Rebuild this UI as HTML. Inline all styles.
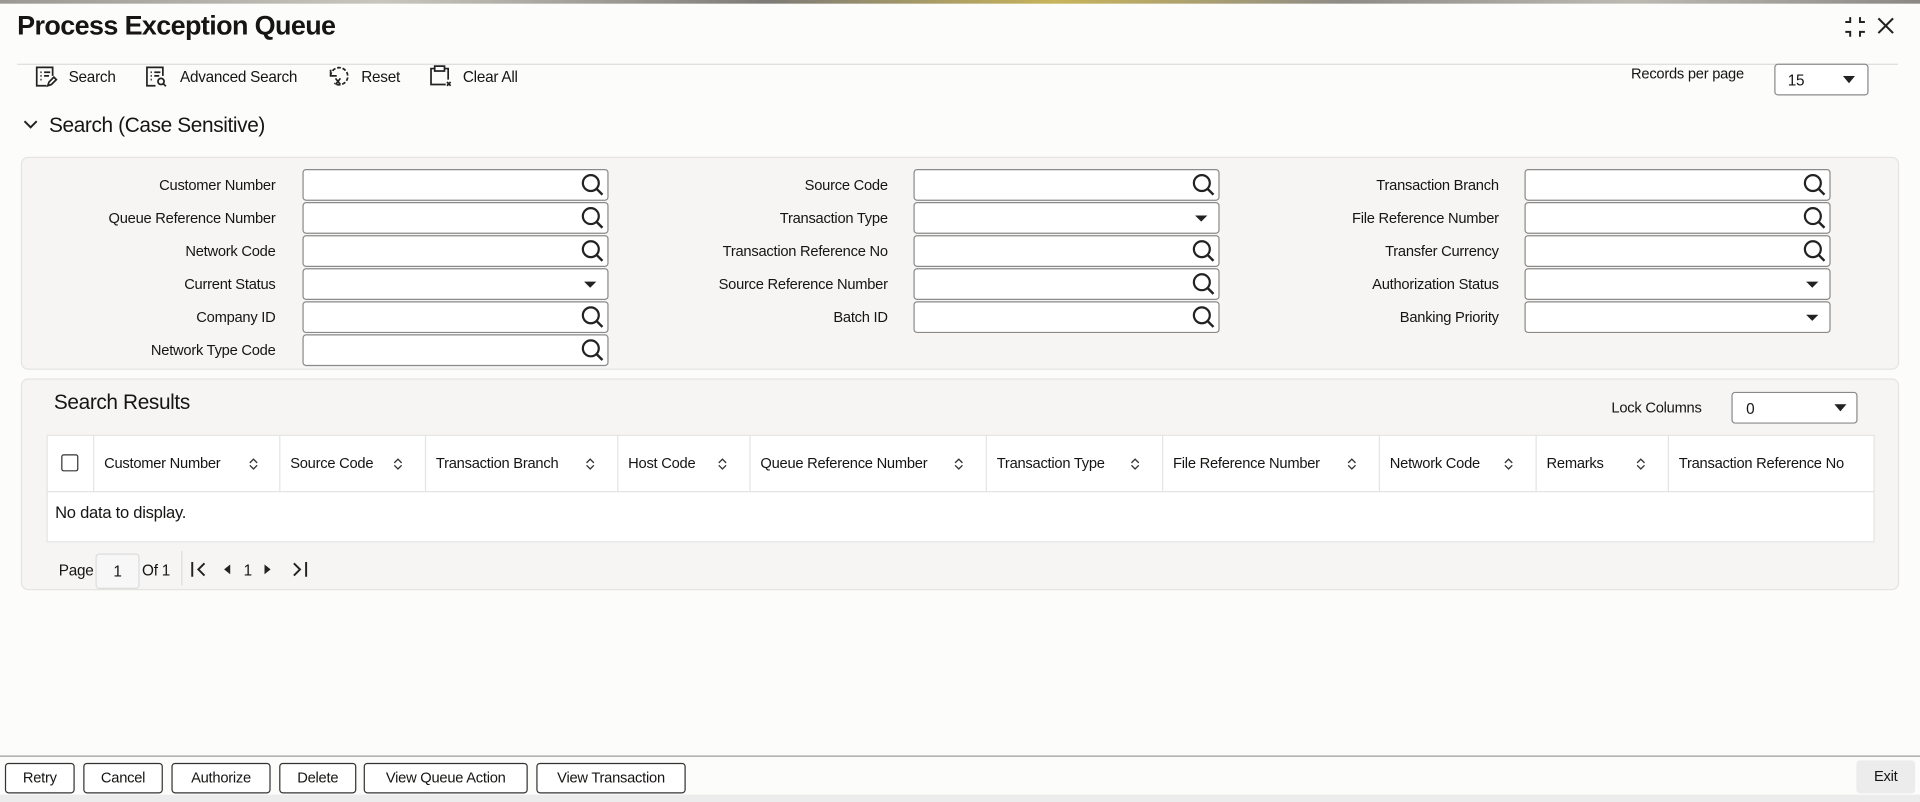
<!DOCTYPE html>
<html><head><meta charset="utf-8">
<style>
html,body{margin:0;padding:0;width:1920px;height:802px;overflow:hidden;background:#fcfcfb;}
#w{position:absolute;left:0;top:0;width:1568px;height:655px;transform:scale(1.22449);transform-origin:0 0;font-family:"Liberation Sans",sans-serif;color:#161513;font-size:12.5px;letter-spacing:-0.2px;}
.a{position:absolute;}
.lbl{position:absolute;text-align:right;width:220px;font-size:12px;line-height:25px;top:1px;}
.inp{position:absolute;width:248px;height:24px;border:1px solid #8a8a8a;border-radius:3px;background:#fff;}
.inp svg{position:absolute;right:2px;top:2px;}
.th{position:absolute;top:355px;height:47px;line-height:47px;border-right:1px solid #e4e4e4;font-size:12px;padding-left:8px;box-sizing:border-box;}
.th svg{position:absolute;top:18px;}
.btn{position:absolute;top:623px;height:23px;border:1px solid #333;border-radius:3px;background:#fff;line-height:23px;text-align:center;font-size:12px;}
</style></head><body>
<div id="w">
<div class="a" style="left:0;top:0;width:1568px;height:3px;background:linear-gradient(90deg,#9a9892,#c9c6bd 20%,#7d7b76 40%,#c8b45a 55%,#8d8b86 70%,#bdbab2 85%,#8a8884);"></div>
<div class="a" style="left:14px;top:8px;font-size:22px;font-weight:bold;letter-spacing:-0.5px;">Process Exception Queue</div>
<svg class="a" style="left:1505px;top:12px" width="20" height="20" viewBox="0 0 20 20" fill="none" stroke="#222" stroke-width="1.6"><path d="M2 6h4V2M14 2v4h4M2 14h4v4M18 14h-4v4"/></svg>
<svg class="a" style="left:1533px;top:14px" width="14" height="14" viewBox="0 0 14 14" stroke="#222" stroke-width="1.7"><path d="M1 1l12 12M13 1L1 13"/></svg>
<div class="a" style="left:14px;top:52px;width:1536px;height:1px;background:#ddd;"></div>

<svg width="0" height="0" style="position:absolute"><defs><symbol id="q" viewBox="0 0 20 20"><circle cx="8.5" cy="8.5" r="6.5" fill="none" stroke="#222" stroke-width="1.8"/><path d="M13 13l5 5" stroke="#222" stroke-width="2"/></symbol><symbol id="d" viewBox="0 0 20 20"><path d="M5 8h10l-5 5z" fill="#222"/></symbol><symbol id="s" viewBox="0 0 8 12"><path d="M1 5l3-3 3 3M1 7l3 3 3-3" fill="none" stroke="#333" stroke-width="1.1"/></symbol></defs></svg>

<svg class="a" style="left:28px;top:53px" width="19" height="19" viewBox="0 0 19 19" fill="none" stroke="#222" stroke-width="1.4"><path d="M10 17H2V2h13v7"/><path d="M5 6h1M8 6h5M5 9h1M8 9h4M5 12h1"/><path d="M11 17l1-3 4-4 2 2-4 4z"/></svg>
<div class="a" style="left:56px;top:56px;">Search</div>
<svg class="a" style="left:118px;top:53px" width="19" height="19" viewBox="0 0 19 19" fill="none" stroke="#222" stroke-width="1.4"><path d="M9 17H2V2h13v7"/><path d="M5 6h1M8 6h5M5 9h1M8 9h4M5 12h1"/><circle cx="13.5" cy="13.5" r="2.5"/><path d="M15.5 15.5l2 2"/></svg>
<div class="a" style="left:147px;top:56px;">Advanced Search</div>
<svg class="a" style="left:266px;top:53px" width="20" height="20" viewBox="0 0 20 20" fill="none" stroke="#222" stroke-width="1.4"><path d="M4 9a7 7 0 1 1 3 6" stroke-dasharray="3 1.5"/><path d="M4 4v5h5"/><path d="M8 11l4 5M12 11l-4 5"/></svg>
<div class="a" style="left:295px;top:56px;">Reset</div>
<svg class="a" style="left:350px;top:52px" width="20" height="20" viewBox="0 0 20 20" fill="none" stroke="#222" stroke-width="1.4"><path d="M14 17H2V4h3M13 4h3v9"/><rect x="5" y="2" width="8" height="4"/><path d="M15 15l3 3M18 15l-3 3"/></svg>
<div class="a" style="left:378px;top:56px;">Clear All</div>

<div class="a" style="left:1332px;top:53px;font-size:12px;">Records per page</div>
<div class="a" style="left:1449px;top:52px;width:75px;height:24px;border:1px solid #8a8a8a;border-radius:3px;background:#fff;"><span class="a" style="left:10px;top:6px;">15</span><svg class="a" style="right:10px;top:9px" width="10" height="6"><path d="M0 0h10L5 6z" fill="#222"/></svg></div>

<svg class="a" style="left:19px;top:98px" width="12" height="8" viewBox="0 0 12 8" fill="none" stroke="#222" stroke-width="1.6"><path d="M1 1l5 5 5-5"/></svg>
<div class="a" style="left:40px;top:93px;font-size:17px;letter-spacing:-0.3px;">Search (Case Sensitive)</div>

<div class="a" style="left:17px;top:128px;width:1532px;height:172px;background:#f6f5f3;border:1px solid #e6e4e1;border-radius:6px;"></div>
<div class="a" style="left:17px;top:309px;width:1532px;height:171px;background:#f6f5f3;border:1px solid #e6e4e1;border-radius:6px;"></div>

<div style="position:absolute;left:5px;top:0">
<div class="lbl" style="top:139px">Customer Number</div>
<div class="lbl" style="top:166px">Queue Reference Number</div>
<div class="lbl" style="top:193px">Network Code</div>
<div class="lbl" style="top:220px">Current Status</div>
<div class="lbl" style="top:247px">Company ID</div>
<div class="lbl" style="top:274px">Network Type Code</div>
</div>
<div style="position:absolute;left:505px;top:0">
<div class="lbl" style="top:139px">Source Code</div>
<div class="lbl" style="top:166px">Transaction Type</div>
<div class="lbl" style="top:193px">Transaction Reference No</div>
<div class="lbl" style="top:220px">Source Reference Number</div>
<div class="lbl" style="top:247px">Batch ID</div>
</div>
<div style="position:absolute;left:1004px;top:0">
<div class="lbl" style="top:139px">Transaction Branch</div>
<div class="lbl" style="top:166px">File Reference Number</div>
<div class="lbl" style="top:193px">Transfer Currency</div>
<div class="lbl" style="top:220px">Authorization Status</div>
<div class="lbl" style="top:247px">Banking Priority</div>
</div>

<div class="inp" style="left:247px;top:138px"><svg width="20" height="20"><use href="#q"/></svg></div>
<div class="inp" style="left:247px;top:165px"><svg width="20" height="20"><use href="#q"/></svg></div>
<div class="inp" style="left:247px;top:192px"><svg width="20" height="20"><use href="#q"/></svg></div>
<div class="inp" style="left:247px;top:219px"><svg width="20" height="20" style="right:4px"><use href="#d"/></svg></div>
<div class="inp" style="left:247px;top:246px"><svg width="20" height="20"><use href="#q"/></svg></div>
<div class="inp" style="left:247px;top:273px"><svg width="20" height="20"><use href="#q"/></svg></div>

<div class="inp" style="left:746px;top:138px"><svg width="20" height="20"><use href="#q"/></svg></div>
<div class="inp" style="left:746px;top:165px"><svg width="20" height="20" style="right:4px"><use href="#d"/></svg></div>
<div class="inp" style="left:746px;top:192px"><svg width="20" height="20"><use href="#q"/></svg></div>
<div class="inp" style="left:746px;top:219px"><svg width="20" height="20"><use href="#q"/></svg></div>
<div class="inp" style="left:746px;top:246px"><svg width="20" height="20"><use href="#q"/></svg></div>

<div class="inp" style="left:1245px;top:138px"><svg width="20" height="20"><use href="#q"/></svg></div>
<div class="inp" style="left:1245px;top:165px"><svg width="20" height="20"><use href="#q"/></svg></div>
<div class="inp" style="left:1245px;top:192px"><svg width="20" height="20"><use href="#q"/></svg></div>
<div class="inp" style="left:1245px;top:219px"><svg width="20" height="20" style="right:4px"><use href="#d"/></svg></div>
<div class="inp" style="left:1245px;top:246px"><svg width="20" height="20" style="right:4px"><use href="#d"/></svg></div>

<div class="a" style="left:44px;top:319px;font-size:17px;letter-spacing:-0.3px;">Search Results</div>
<div class="a" style="left:1316px;top:326px;font-size:12px;">Lock Columns</div>
<div class="a" style="left:1414px;top:320px;width:101px;height:24px;border:1px solid #8a8a8a;border-radius:3px;background:#fff;"><span class="a" style="left:11px;top:6px;">0</span><svg class="a" style="right:8px;top:9px" width="10" height="6"><path d="M0 0h10L5 6z" fill="#222"/></svg></div>

<div class="a" style="left:38px;top:355px;width:1491px;height:86px;background:#fff;border:1px solid #e4e4e4;"></div>
<div class="a" style="left:38px;top:401px;width:1492px;height:1px;background:#e4e4e4;"></div>
<div class="th" style="left:38px;width:39px;"><div class="a" style="left:12px;top:16px;width:12px;height:12px;border:1.5px solid #333;border-radius:2px;"></div></div>
<div class="th" style="left:77px;width:152px;">Customer Number<svg width="8" height="12" style="left:126px"><use href="#s"/></svg></div>
<div class="th" style="left:229px;width:119px;">Source Code<svg width="8" height="12" style="left:92px"><use href="#s"/></svg></div>
<div class="th" style="left:348px;width:157px;">Transaction Branch<svg width="8" height="12" style="left:130px"><use href="#s"/></svg></div>
<div class="th" style="left:505px;width:108px;">Host Code<svg width="8" height="12" style="left:81px"><use href="#s"/></svg></div>
<div class="th" style="left:613px;width:193px;">Queue Reference Number<svg width="8" height="12" style="left:166px"><use href="#s"/></svg></div>
<div class="th" style="left:806px;width:144px;">Transaction Type<svg width="8" height="12" style="left:117px"><use href="#s"/></svg></div>
<div class="th" style="left:950px;width:177px;">File Reference Number<svg width="8" height="12" style="left:150px"><use href="#s"/></svg></div>
<div class="th" style="left:1127px;width:128px;">Network Code<svg width="8" height="12" style="left:101px"><use href="#s"/></svg></div>
<div class="th" style="left:1255px;width:108px;">Remarks<svg width="8" height="12" style="left:81px"><use href="#s"/></svg></div>
<div class="th" style="left:1363px;width:166px;border-right:none;">Transaction Reference No</div>
<div class="a" style="left:45px;top:411px;font-size:13.5px;">No data to display.</div>

<div class="a" style="left:48px;top:459px;">Page</div>
<div class="a" style="left:78px;top:452px;width:34px;height:27px;border:1px solid #ddd;border-radius:3px;background:#f7f7f7;text-align:center;line-height:28px;">1</div>
<div class="a" style="left:116px;top:459px;">Of 1</div>
<div class="a" style="left:148px;top:450px;width:1px;height:28px;background:#ddd;"></div>
<svg class="a" style="left:155px;top:458px" width="100" height="14" viewBox="0 0 100 14" fill="none" stroke="#222" stroke-width="1.6"><path d="M2 1v12M12 2l-5 5 5 5"/><path d="M33 3v8l-5-4z" fill="#222" stroke="none"/><path d="M61 3v8l5-4z" fill="#222" stroke="none"/><path d="M85 2l5 5-5 5M95 1v12"/></svg>
<div class="a" style="left:199px;top:459px;">1</div>

<div class="a" style="left:0;top:617px;width:1568px;height:1px;background:#9a9a9a;"></div>
<div class="btn" style="left:4px;width:55px;">Retry</div>
<div class="btn" style="left:68px;width:63px;">Cancel</div>
<div class="btn" style="left:140px;width:79px;">Authorize</div>
<div class="btn" style="left:228px;width:61px;">Delete</div>
<div class="btn" style="left:297px;width:132px;">View Queue Action</div>
<div class="btn" style="left:438px;width:120px;">View Transaction</div>
<div class="a" style="left:1516px;top:621px;width:48px;height:27px;background:#ececec;border-radius:3px;text-align:center;line-height:27px;font-size:12px;">Exit</div>
<div class="a" style="left:0;top:649px;width:1568px;height:6px;background:#ececec;"></div>
</div>
</body></html>
